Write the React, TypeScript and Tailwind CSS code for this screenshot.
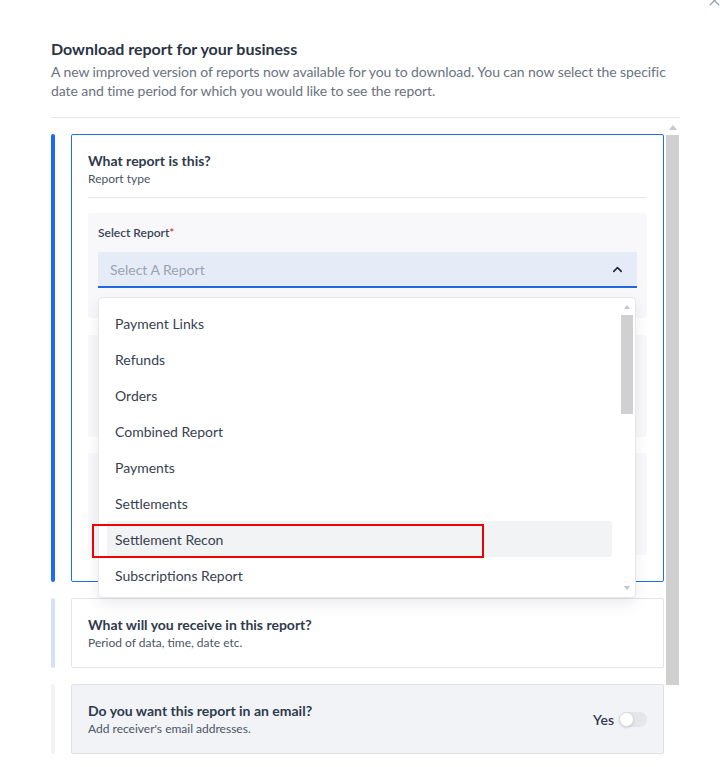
import React from "react";
import { X, ChevronUp } from "lucide-react";

const items = [
  "Payment Links",
  "Refunds",
  "Orders",
  "Combined Report",
  "Payments",
  "Settlements",
  "Settlement Recon",
  "Subscriptions Report",
];

function GrayBox({ children, className = "" }: { children?: React.ReactNode; className?: string }) {
  return <div className={"rounded-[3px] bg-[#f8f8fa] " + className}>{children}</div>;
}

export default function App() {
  return (
    <div
      className="relative w-[720px] h-[767px] overflow-hidden bg-white text-[#2f3a4d]"
      style={{ fontFamily: "Lato, 'Noto Sans', sans-serif" }}
    >
      <X className="absolute right-[-3px] top-[-8px] h-[17px] w-[17px] text-[#9aa5b8]" strokeWidth={2} />

      <div className="pl-[51px] pr-[40px] pt-[39px]">
        <h1 className="text-[16px] leading-[20px] font-bold text-[#2a3445]">Download report for your business</h1>
        <p className="mt-[3px] text-[14px] leading-[19px] tracking-[-0.08px] text-[#6b7280]">
          A new improved version of reports now available for you to download. You can now select the specific date and time period for which you would like to see the report.
        </p>
        <div className="mt-[17px] h-px bg-[#e6e7ea]" />

        <div className="flex h-[650px]">
          {/* content */}
          <div className="w-[615px] pt-[16px] flex flex-col gap-[16px]">
            {/* Row 1 */}
            <div className="flex">
              <div className="w-[4px] rounded-full bg-[#1b6cf2]" />
              <div className="ml-[16px] mr-[2px] flex-1 rounded-[2px] border border-[#1f6fe8] bg-white px-[16px] pt-[17px] pb-[26px]">
                <div className="text-[14px] leading-[18px] font-bold text-[#2f3a4d]">What report is this?</div>
                <div className="mt-[1px] text-[12px] leading-[16px] text-[#4b5566]">Report type</div>
                <div className="mt-[10px] h-px bg-[#e6e7ea]" />

                <GrayBox className="mt-[15px] h-[105px] px-[10px] pt-[12px]">
                  <div className="text-[12px] leading-[16px] font-semibold text-[#3a4456]">
                    Select Report<span className="text-[#e53935]">*</span>
                  </div>
                  <div className="relative mt-[11px]">
                    <div className="flex h-[36px] items-center justify-between rounded-t-[2px] border-b-[2px] border-[#1b6ae0] bg-[#e5ecf8] pl-[12px] pr-[12px]">
                      <span className="text-[14px] text-[#9aa3b2]">Select A Report</span>
                      <ChevronUp className="h-[15px] w-[15px] text-[#1f2937]" strokeWidth={2.5} />
                    </div>

                    {/* dropdown */}
                    <div className="absolute left-0 top-full z-10 mt-[9px] h-[301px] w-[538px] overflow-hidden rounded-[4px] border border-[#e7e8ec] bg-white shadow-[0_6px_14px_rgba(0,0,0,0.08)]">
                      <div className="flex h-full">
                        <div className="flex-1 pl-[8px] pr-[9px] pt-[7px]">
                          {items.map((it) => (
                            <div
                              key={it}
                              className={
                                "flex h-[36px] items-center rounded-[3px] px-[8px] text-[14px] text-[#374151] " +
                                (it === "Settlement Recon" ? "bg-[#f2f3f5]" : "")
                              }
                            >
                              {it}
                            </div>
                          ))}
                        </div>
                        <div className="relative w-[12px] mr-[2px]">
                          <div className="absolute left-[3px] top-[7px] h-0 w-0 border-x-[3px] border-b-[4px] border-x-transparent border-b-[#c4c4c4]" />
                          <div className="absolute left-0 top-[17px] h-[99px] w-[12px] bg-[#d0d0d0]" />
                          <div className="absolute left-[3px] bottom-[7px] h-0 w-0 border-x-[3px] border-t-[4px] border-x-transparent border-t-[#c4c4c4]" />
                        </div>
                      </div>
                    </div>
                  </div>
                </GrayBox>
                <GrayBox className="mt-[17px] h-[102px]" />
                <GrayBox className="mt-[16px] h-[102px]" />
              </div>
            </div>

            {/* Row 2 */}
            <div className="flex">
              <div className="w-[4px] rounded-full bg-[#d3e2fb]" />
              <div className="ml-[16px] mr-[2px] flex-1 rounded-[2px] border border-[#e3e5ea] bg-white px-[16px] pt-[17px] pb-[16px]">
                <div className="text-[14px] leading-[18px] font-bold text-[#2f3a4d]">What will you receive in this report?</div>
                <div className="mt-[1px] text-[12px] leading-[16px] text-[#4b5566]">Period of data, time, date etc.</div>
              </div>
            </div>

            {/* Row 3 */}
            <div className="flex">
              <div className="w-[4px] rounded-full bg-[#f1f2f5]" />
              <div className="ml-[16px] mr-[2px] flex flex-1 items-center justify-between rounded-[2px] border border-[#dfe1e6] bg-[#f2f3f7] pl-[16px] pr-[16px] pt-[17px] pb-[16px]">
                <div>
                  <div className="text-[14px] leading-[18px] font-bold text-[#2f3a4d]">Do you want this report in an email?</div>
                  <div className="mt-[1px] text-[12px] leading-[16px] text-[#4b5566]">Add receiver's email addresses.</div>
                </div>
                <div className="flex items-center gap-[5px]">
                  <span className="text-[14px] font-semibold text-[#2f3a4d]">Yes</span>
                  <div className="relative h-[15px] w-[28px] rounded-full bg-[#e4e6ea]">
                    <div className="absolute left-0 top-0 h-[15px] w-[15px] rounded-full border border-[#d5d8de] bg-white shadow-sm" />
                  </div>
                </div>
              </div>
            </div>
          </div>

          {/* outer scrollbar */}
          <div className="relative w-[14px]">
            <div className="absolute left-[3px] top-[7px] h-0 w-0 border-x-[4px] border-b-[5px] border-x-transparent border-b-[#c8c8c8]" />
            <div className="absolute left-0 top-[17px] h-[550px] w-[13px] bg-[#d0d0d0]" />
          </div>
        </div>
      </div>

      {/* highlight annotation */}
      <div className="pointer-events-none absolute left-[92px] top-[524px] z-20 h-[34px] w-[392px] border-[2px] border-[#f00000]" />
    </div>
  );
}
